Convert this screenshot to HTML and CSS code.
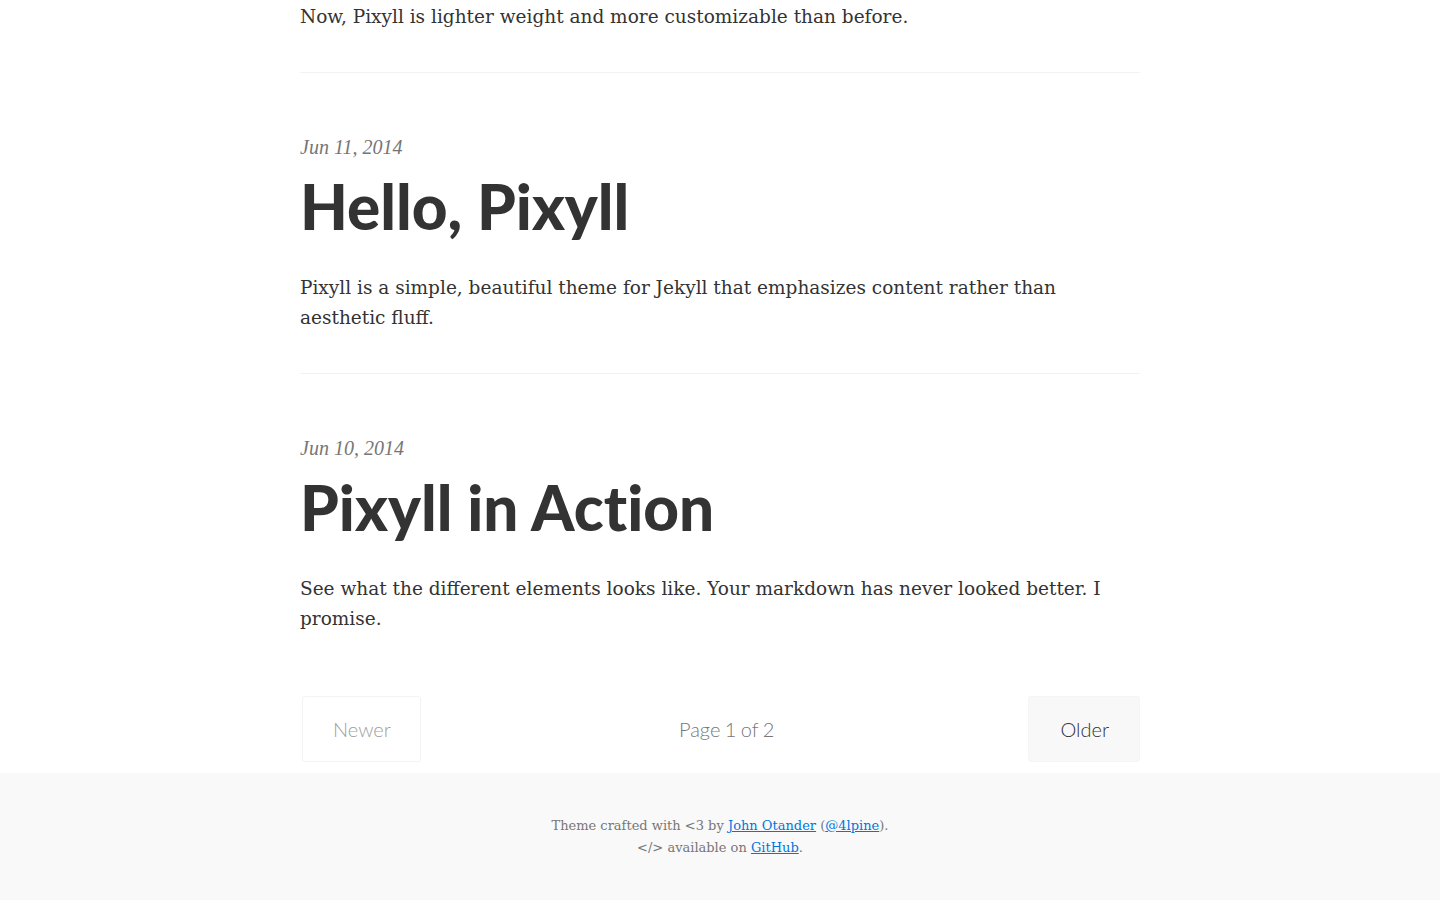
FILE: index.html
```html
<!DOCTYPE html>
<html lang="en">
<head>
<meta charset="utf-8">
<title>Pixyll</title>
<link rel="stylesheet" href="styles.css">
</head>
<body>
<main class="content">
  <div class="prev-summary">
    <p class="summary">Now, Pixyll is lighter weight and more customizable than before.</p>
  </div>
  <article class="post">
    <div class="post-meta">Jun 11, 2014</div>
    <h1 class="post-title">Hello, Pixyll</h1>
    <p class="summary">Pixyll is a simple, beautiful theme for Jekyll that emphasizes content rather than aesthetic fluff.</p>
  </article>
  <article class="post last">
    <div class="post-meta">Jun 10, 2014</div>
    <h1 class="post-title">Pixyll in Action</h1>
    <p class="summary">See what the different elements looks like. Your markdown has never looked better. I promise.</p>
  </article>
  <nav class="pagination">
    <span class="button disabled">Newer</span>
    <span class="page-number">Page 1 of 2</span>
    <a class="button" href="#">Older</a>
  </nav>
</main>
<footer class="footer">
  <p>Theme crafted with &lt;3 by <a href="#">John Otander</a> (<a href="#">@4lpine</a>).<br>&lt;/&gt; available on <a href="#">GitHub</a>.</p>
</footer>
</body>
</html>
```
FILE: styles.css
```css
html, body {
  margin: 0;
  padding: 0;
  background: #fff;
  color: #333;
}
body {
  font-family: "DejaVu Serif", "Liberation Serif", serif;
}
.content {
  width: 840px;
  margin: 0 auto;
}
.summary {
  margin: 0;
  font-size: 18.5px;
  line-height: 30px;
  color: #333;
}
.prev-summary {
  padding-top: 2px;
  padding-bottom: 40px;
  border-bottom: 1px solid #f2f2f2;
}
.post {
  padding-top: 59px;
  padding-bottom: 40px;
  border-bottom: 1px solid #f2f2f2;
}
.post.last {
  border-bottom: none;
  padding-bottom: 0;
}
.post-meta {
  font-family: "Liberation Serif", "DejaVu Serif", serif;
  font-style: italic;
  font-size: 20px;
  line-height: 30px;
  color: #767676;
}
.post-title {
  margin: 9px 0 32px;
  font-family: "Lato", "Liberation Sans", sans-serif;
  font-weight: 900;
  font-size: 62px;
  line-height: 70px;
  color: #333;
  font-variant-ligatures: none;
}
.pagination {
  margin-top: 62px;
  margin-bottom: 11px;
  display: flex;
  justify-content: space-between;
  align-items: center;
  font-family: "Lato", "Liberation Sans", sans-serif;
  font-weight: 300;
  font-size: 20px;
}
.button {
  display: block;
  padding: 17px 30px 17px 31px;
  line-height: 30px;
  border: 1px solid #f5f5f5;
  border-radius: 3px;
  background: #f8f8f8;
  color: #333;
  text-decoration: none;
}
.button.disabled {
  background: #fff;
  color: #9e9e9e;
  border-color: #f3f3f3;
  margin-left: 2px;
  padding-left: 30px;
  padding-right: 29px;
}
.page-number {
  color: #777;
  line-height: 30px;
  margin-left: 4px;
  word-spacing: -1px;
}
.footer {
  background: #f9f9f9;
  padding: 42px 0 41px;
  text-align: center;
}
.footer p {
  margin: 0;
  font-size: 13px;
  line-height: 22px;
  color: #777;
}
.footer a {
  color: #0076df;
}
```
